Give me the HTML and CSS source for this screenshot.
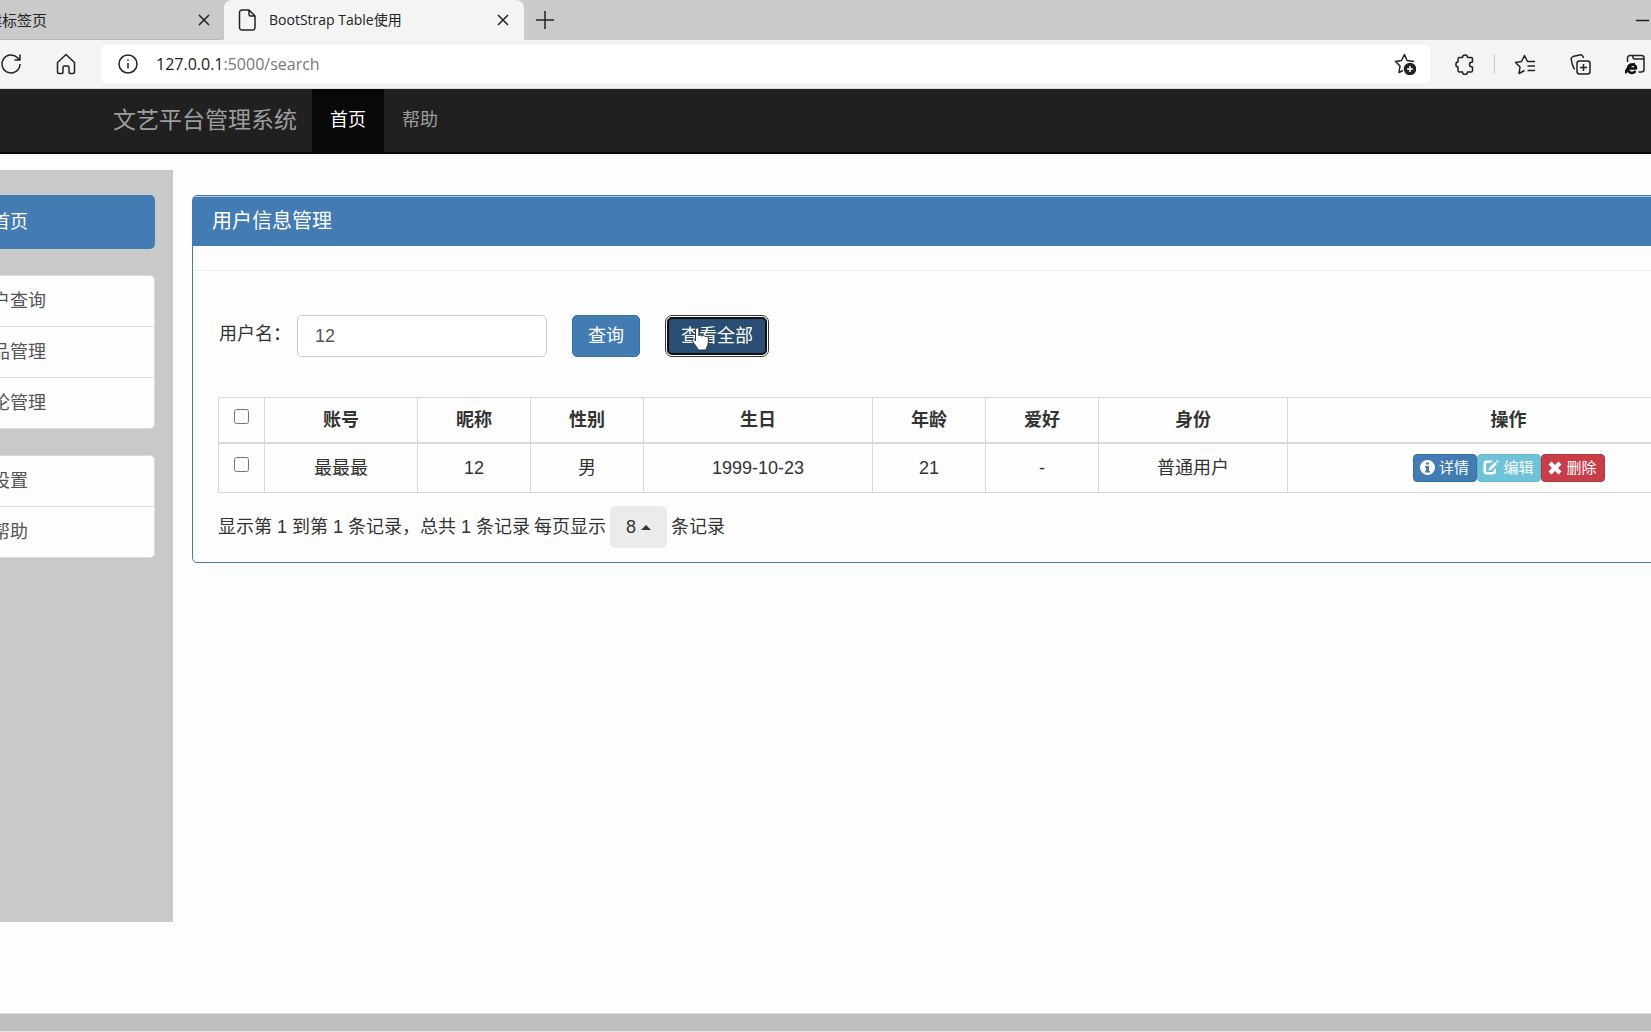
FILE: index.html
```html
<!DOCTYPE html>
<html lang="zh-CN">
<head>
<meta charset="utf-8">
<title>BootStrap Table使用</title>
<link rel="stylesheet" href="styles.css">
</head>
<body>
<header class="browser">
  <div class="tabs">
    <div class="tab tab-back">
      <span class="tab-title">新建标签页</span>
      <button class="icon-btn" type="button" aria-label="关闭标签页"><svg width="12" height="12" viewBox="0 0 12 12"><path d="M1 1l10 10M11 1L1 11"/></svg></button>
    </div>
    <div class="tab tab-active">
      <svg width="18" height="22" viewBox="0 0 18 22"><path d="M4 1h7l6 6v11.500a2.500 2.500 0 0 1-2.500 2.500h-10.500a2.500 2.500 0 0 1-2.500-2.500v-15a2.500 2.500 0 0 1 2.500-2.500zM11 1v4.500a1.500 1.500 0 0 0 1.500 1.500h4.500"/></svg>
      <span class="tab-title">BootStrap Table使用</span>
      <button class="icon-btn" type="button" aria-label="关闭标签页"><svg width="12" height="12" viewBox="0 0 12 12"><path d="M1 1l10 10M11 1L1 11"/></svg></button>
    </div>
    <button class="icon-btn new-tab" type="button" aria-label="新建标签页"><svg width="18" height="18" viewBox="0 0 18 18"><path d="M9 0v18M0 9h18"/></svg></button>
    <button class="icon-btn minimize" type="button" aria-label="最小化"><svg width="13" height="3" viewBox="0 0 13 3"><path d="M0 1.500h13"/></svg></button>
  </div>
  <div class="toolbar">
    <button class="icon-btn" type="button" aria-label="刷新"><svg width="22" height="22" viewBox="0 0 22 22"><path d="M20 11a9 9 0 1 1-2.500-6.300L19.500 7M20 1.500V7h-5.500"/></svg></button>
    <button class="icon-btn" type="button" aria-label="主页"><svg width="20" height="22" viewBox="0 0 20 22"><path d="M1.500 9.500L10 1.500l8.500 8v9.500a1.500 1.500 0 0 1-1.500 1.500h-3a1 1 0 0 1-1-1v-5a1.500 1.500 0 0 0-1.500-1.500h-3a1.500 1.500 0 0 0-1.500 1.500v5a1 1 0 0 1-1 1h-3a1.500 1.500 0 0 1-1.500-1.500z"/></svg></button>
    <div class="address">
      <svg width="20" height="20" viewBox="0 0 20 20"><circle cx="10" cy="10" r="9"/><path d="M10 9v5.500M10 5.500v1.500"/></svg>
      <span class="url">127.0.0.1<span class="url-rest">:5000/search</span></span>
      <button class="icon-btn" type="button" aria-label="收藏"><svg width="22" height="22" viewBox="0 0 22 22"><path d="M20 8.500l-7-1L10.500 1.500 7.500 7.500l-6 1 4.500 4.500-1 6.500 4-2"/><circle class="solid" cx="16" cy="16" r="5.500"/><path class="light" d="M16 13v6M13 16h6"/></svg></button>
    </div>
    <div class="tools">
      <button class="icon-btn" type="button" aria-label="扩展"><svg width="20" height="21" viewBox="0 0 20 21"><path d="M4.500 3.500h3c0-3.300 5-3.300 5 0h3.500a1.500 1.500 0 0 1 1.500 1.500v3c-4 0-4 5 0 5v3.500a1.500 1.500 0 0 1-1.500 1.500h-3.500c0 3.300-5 3.300-5 0h-3A1.500 1.500 0 0 1 3 16.500V13C.200 13 .200 8 3 8V5a1.500 1.500 0 0 1 1.500-1.500z"/></svg></button>
      <span class="divider"></span>
      <button class="icon-btn" type="button" aria-label="收藏夹"><svg width="22" height="21" viewBox="0 0 22 21"><path d="M21 7.500h-7.500L10.500 1.500 7.500 7.500l-6 1 4.500 4.500-1 6.500 5.500-3M13.500 12H21M13.500 16.500H21"/></svg></button>
      <button class="icon-btn" type="button" aria-label="集锦"><svg width="21" height="21" viewBox="0 0 21 21"><rect x="7" y="7" width="13" height="13" rx="2.500"/><path d="M13.500 10v7M10 13.500h7M4.500 15.500C2.500 12 1.500 8 1.200 5 1 3.800 2 3 3 2.600L9.500 1C11.500.500 13 1.500 13.500 4"/></svg></button>
      <button class="icon-btn" type="button" aria-label="IE 模式"><svg width="20" height="21" viewBox="0 0 20 21"><path d="M2.500 8V4a2.500 2.500 0 0 1 2.500-2.500h11.500a2.500 2.500 0 0 1 2.500 2.500v11.500a2.500 2.500 0 0 1-2.500 2.500h-3M8 1.500v2a1.500 1.500 0 0 0 1.500 1.500H19"/><path class="bold" d="M2.500 14.500h8.500c0-5-7.500-5.500-8 0-.500 5 5.500 5.500 7.500 2.500M1 19.500c-1-3 4-9 9-9.500"/></svg></button>
    </div>
  </div>
</header>

<nav class="navbar">
  <a class="brand" href="#">文艺平台管理系统</a>
  <a class="nav-link active" href="#">首页</a>
  <a class="nav-link" href="#">帮助</a>
</nav>

<div class="layout">
  <aside class="sidebar">
    <a class="side-home" href="#">首页</a>
    <div class="side-group">
      <a href="#">用户查询</a>
      <a href="#">作品管理</a>
      <a href="#">评论管理</a>
    </div>
    <div class="side-group">
      <a href="#">设置</a>
      <a href="#">帮助</a>
    </div>
  </aside>

  <main class="panel">
    <h1 class="panel-title">用户信息管理</h1>
    <div class="panel-strip"></div>
    <div class="panel-body">
      <form class="search">
        <label for="username">用户名：</label>
        <input class="field" id="username" type="text" value="12">
        <button class="btn" type="button">查询</button>
        <button class="btn btn-focus" type="button">查看全部
          <svg class="pointer" width="20" height="24" viewBox="0 0 20 24"><path d="M4.500 14V2.500a1.700 1.700 0 0 1 3.400 0V9c0-1.500 3-1.500 3.200.300 0-1.300 3-1.200 3.200.700.200-1.200 3-1 3 1v5c0 2.500-2 4-2.300 7H7C6.500 20 3.500 18 1.500 14 .300 11.500 2.500 10.500 4.500 14z"/></svg>
        </button>
      </form>
      <table class="users">
        <colgroup><col class="c-check"><col class="c-account"><col class="c-short"><col class="c-short"><col class="c-birth"><col class="c-short"><col class="c-short"><col class="c-role"><col></colgroup>
        <thead>
          <tr><th><input type="checkbox" aria-label="全选"></th><th>账号</th><th>昵称</th><th>性别</th><th>生日</th><th>年龄</th><th>爱好</th><th>身份</th><th>操作</th></tr>
        </thead>
        <tbody>
          <tr>
            <td><input type="checkbox" aria-label="选择"></td><td>最最最</td><td>12</td><td>男</td><td>1999-10-23</td><td>21</td><td>-</td><td>普通用户</td>
            <td><div class="actions">
              <button class="act act-info" type="button"><svg width="15" height="15" viewBox="0 0 15 15"><circle cx="7.500" cy="7.500" r="7.500"/><path class="cut" d="M6 2.500h3v2H6zM5 6h4v5h1v1.500H5V11h1V7.500H5z"/></svg>详情</button>
              <button class="act act-edit" type="button"><svg width="16" height="15" viewBox="0 0 16 15"><path d="M10 .500H3.500A3 3 0 0 0 .500 3.500v8a3 3 0 0 0 3 3H10a3 3 0 0 0 3-3V8l-2.500 2.500V11a1 1 0 0 1-1 1H4a1 1 0 0 1-1-1V4a1 1 0 0 1 1-1H7.500zM12 2l2 2L8.500 9.500 5.500 10.500l1-3zM13 1l1-1 2 2-1 1z"/></svg>编辑</button>
              <button class="act act-delete" type="button"><svg width="14" height="14" viewBox="0 0 14 14"><path d="M3.500.500L7 4l3.500-3.500 3 3L10 7l3.500 3.500-3 3L7 10l-3.500 3.500-3-3L4 7 .500 3.500z"/></svg>删除</button>
            </div></td>
          </tr>
        </tbody>
      </table>
      <div class="pager">
        <span>显示第 1 到第 1 条记录，总共 1 条记录</span>
        <span>每页显示</span>
        <button class="page-size" type="button">8<span class="caret"></span></button>
        <span>条记录</span>
      </div>
    </div>
  </main>
</div>
<div class="scrollbar"></div>
</body>
</html>
```

FILE: styles.css
```css
* { box-sizing: border-box; }

body {
  margin: 0;
  min-height: 100vh;
  display: flex;
  flex-direction: column;
  overflow: hidden;
  background: #fdfdfd;
  color: #333;
  font: 18px/26px "Liberation Sans", "Noto Sans CJK SC", sans-serif;
}

a { color: inherit; text-decoration: none; }
button, input { font: inherit; color: inherit; }

/* Browser window */
.browser { font-family: "Open Sans", "Noto Sans CJK SC", sans-serif; color: #222; }
.browser svg { display: block; flex: none; fill: none; stroke: #222; stroke-width: 1.5; stroke-linejoin: round; }
.browser .solid { fill: #222; }
.browser .light { stroke: #fff; }
.browser .bold { stroke: #111; stroke-width: 2.5; }
.icon-btn { padding: 0; border: 0; background: none; flex: none; }

.tabs { display: flex; align-items: stretch; height: 40px; background: #cacaca; font-size: 14px; }
.tab { display: flex; align-items: center; }
.tab-title { flex: 1; white-space: nowrap; }
.tab-back { width: 224px; padding-right: 14px; justify-content: flex-end; border-bottom: 1px solid #b5b5b5; border-radius: 0 0 6px 0; }
.tab-back .tab-title { margin-left: -28px; font-size: 15px; }
.tab-active { width: 300px; gap: 13px; padding: 0 15px 0 14px; background: #f4f4f4; border-radius: 8px 8px 0 0; }
.tab-active .icon-btn { margin-left: auto; }
.new-tab { width: 42px; padding-left: 12px; }
.minimize { margin-left: auto; padding-right: 2px; }

.toolbar { display: flex; align-items: center; height: 49px; background: #f4f4f4; border-bottom: 1px solid #ddd; }
.toolbar > .icon-btn { margin-right: 34px; }
.toolbar > .icon-btn + .icon-btn { margin-right: 25px; }
.address { flex: 1; display: flex; align-items: center; gap: 18px; height: 38px; padding: 0 14px 0 17px; background: #fff; border-radius: 5px; }
.url { flex: 1; font-size: 16px; }
.url-rest { color: #777; }
.tools { display: flex; align-items: center; padding: 0 6px 0 25px; }
.divider { width: 1px; height: 20px; margin: 0 19px; background: #ccc; }
.tools .icon-btn + .icon-btn { margin-left: 34px; }

/* Site navigation */
.navbar { display: flex; height: 65px; padding-left: 113px; background: #202020; border-bottom: 2px solid #080808; color: #9d9d9d; line-height: 63px; }
.brand { padding-right: 15px; font-size: 23px; }
.nav-link { padding: 0 18px; }
.nav-link.active { background: #080808; color: #fff; }

/* Sidebar runs off the left edge, the panel off the right */
.layout { flex: 1; display: flex; align-items: flex-start; gap: 19px; margin: 0 -105px 0 -153px; padding: 16px 0 91px; }
.sidebar { flex: 0 0 326px; align-self: stretch; display: flex; flex-direction: column; gap: 26px; padding: 25px 18px; background: #c9c9c9; text-align: center; }
.side-home { padding: 14px 13px; border-radius: 5px; background: #437cb2; color: #fff; }
.side-group { display: flex; flex-direction: column; overflow: hidden; border: 1px solid #ddd; border-radius: 5px; background: #fdfdfd; color: #555; }
.side-group a { padding: 12px; }
.side-group a + a { border-top: 1px solid #ddd; }

.panel { flex: 1; min-width: 0; margin-top: 25px; border: 1px solid #437cb2; border-radius: 5px; overflow: hidden; }
.panel-title { margin: 0; padding: 11px 19px 12px; border-top: 1px solid #b4cde2; background: #437cb2; color: #fff; font-size: 20px; font-weight: 400; }
.panel-strip { height: 25px; border-bottom: 1px solid #eee; }
.panel-body { padding: 44px 25px 14px; }

.search { display: flex; align-items: center; gap: 25px; }
.search label { width: 79px; margin-right: -25px; padding: 0 0 4px 1px; white-space: nowrap; }
.field { width: 250px; height: 42px; padding: 0 17px; border: 1px solid #ccc; border-radius: 5px; background: #fff; color: #555; }
.btn { position: relative; height: 42px; padding: 0 15px; border: 1px solid #38709f; border-radius: 5px; background: #437cb2; color: #fff; }
.btn-focus { padding: 0 12px; border: 2px solid #101010; outline: 1px solid #333; outline-offset: 1px; height: 38px; margin: 0 2px; background: #284e73; }
.pointer { position: absolute; left: 22px; top: 8px; fill: #fff; stroke: #333; stroke-width: 1; }

.users { width: 100%; margin-top: 40px; border-collapse: collapse; table-layout: fixed; text-align: center; }
.users th, .users td { padding: 0; border: 1px solid #d8d8d8; }
.users th { height: 45px; border-bottom-width: 2px; }
.users td { height: 50px; }
.users input { display: block; width: 15px; height: 15px; margin: 0 auto 6px; }
.c-check { width: 46px; }
.c-account { width: 153px; }
.c-short { width: 113px; }
.c-birth { width: 229px; }
.c-role { width: 189px; }

.actions { display: flex; justify-content: center; }
.act { display: flex; align-items: center; justify-content: center; gap: 4px; width: 64px; height: 28px; padding: 0; border: 1px solid; border-radius: 4px; color: #fff; font-size: 15px; line-height: 20px; }
.act svg { fill: #fff; flex: none; }
.act-info { background: #437cb2; border-color: #38709f; }
.act-info .cut { fill: #437cb2; }
.act-edit { background: #6fc3d8; border-color: #63b9cf; }
.act-delete { background: #c73e49; border-color: #b43540; }

.pager { display: flex; align-items: center; gap: 4px; margin-top: 13px; }
.page-size { display: flex; align-items: center; gap: 5px; height: 42px; padding: 0 16px; border: 0; border-radius: 5px; background: #ebebeb; }
.caret { border: 5px solid transparent; border-top: 0; border-bottom-color: #333; }

.scrollbar { height: 19px; background: #bfbfbf; border-top: 1px solid #ddd; border-bottom: 1px solid #e8e8e8; }
```
